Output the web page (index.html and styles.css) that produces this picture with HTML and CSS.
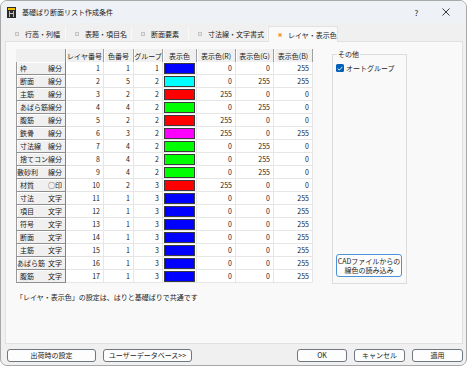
FILE: index.html
```html
<!DOCTYPE html>
<html lang="ja">
<head>
<meta charset="utf-8">
<title>基礎ばり断面リスト作成条件</title>
<link rel="stylesheet" href="styles.css">
</head>
<body>
<div class="window">
  <div class="titlebar">
    <svg class="app-icon" width="9" height="11" viewBox="0 0 9 11">
      <rect x="0" y="0" width="9" height="11" fill="#2b2b2b"/>
      <rect x="1" y="1" width="7" height="2" fill="#f2c200"/>
      <rect x="2" y="4" width="1" height="6" fill="#f2c200"/>
      <rect x="6" y="4" width="1" height="6" fill="#f2c200"/>
      <rect x="3" y="6" width="3" height="1" fill="#d0d0d0"/>
    </svg>
    <span class="title">基礎ばり断面リスト作成条件</span>
    <span class="tb-btn help">?</span>
    <span class="tb-btn close">
      <svg width="8" height="8" viewBox="0 0 8 8"><path d="M0.5 0.5 L7.5 7.5 M7.5 0.5 L0.5 7.5" stroke="#222" stroke-width="0.9"/></svg>
    </span>
  </div>

  <div class="tabs">
    <div class="tab t1"><span class="tab-ic"></span><span>行高・列幅</span></div>
    <div class="tab t2"><span class="tab-ic"></span><span>表題・項目名</span></div>
    <div class="tab t3"><span class="tab-ic"></span><span>断面要素</span></div>
    <div class="tab t4"><span class="tab-ic"></span><span>寸法線・文字書式</span></div>
    <div class="tab t5 active"><span class="tab-ic"></span><span>レイヤ・表示色</span></div>
  </div>

  <div class="panel">
    <div class="content">
      <table class="grid">
        <colgroup>
          <col class="w-rh"><col class="w-38"><col class="w-30"><col class="w-29"><col class="w-34"><col class="w-39"><col class="w-38"><col class="w-39">
        </colgroup>
        <thead>
          <tr>
            <th class="corner"></th>
            <th>レイヤ番号</th><th>色番号</th><th>グループ</th><th>表示色</th><th>表示色(R)</th><th>表示色(G)</th><th>表示色(B)</th>
          </tr>
        </thead>
        <tbody>
          <tr><th class="rh"><div class="rh-in"><span>枠</span><span>線分</span></div></th><td>1</td><td>1</td><td>1</td><td class="sw"><div class="swatch blue"></div></td><td>0</td><td>0</td><td>255</td></tr>
          <tr><th class="rh"><div class="rh-in"><span>断面</span><span>線分</span></div></th><td>2</td><td>5</td><td>2</td><td class="sw"><div class="swatch cyan"></div></td><td>0</td><td>255</td><td>255</td></tr>
          <tr><th class="rh"><div class="rh-in"><span>主筋</span><span>線分</span></div></th><td>3</td><td>2</td><td>2</td><td class="sw"><div class="swatch red"></div></td><td>255</td><td>0</td><td>0</td></tr>
          <tr><th class="rh"><div class="rh-in"><span>あばら筋</span><span>線分</span></div></th><td>4</td><td>4</td><td>2</td><td class="sw"><div class="swatch green"></div></td><td>0</td><td>255</td><td>0</td></tr>
          <tr><th class="rh"><div class="rh-in"><span>腹筋</span><span>線分</span></div></th><td>5</td><td>2</td><td>2</td><td class="sw"><div class="swatch red"></div></td><td>255</td><td>0</td><td>0</td></tr>
          <tr><th class="rh"><div class="rh-in"><span>鉄骨</span><span>線分</span></div></th><td>6</td><td>3</td><td>2</td><td class="sw"><div class="swatch magenta"></div></td><td>255</td><td>0</td><td>255</td></tr>
          <tr><th class="rh"><div class="rh-in"><span>寸法線</span><span>線分</span></div></th><td>7</td><td>4</td><td>2</td><td class="sw"><div class="swatch green"></div></td><td>0</td><td>255</td><td>0</td></tr>
          <tr><th class="rh"><div class="rh-in"><span>捨てコン</span><span>線分</span></div></th><td>8</td><td>4</td><td>2</td><td class="sw"><div class="swatch green"></div></td><td>0</td><td>255</td><td>0</td></tr>
          <tr><th class="rh"><div class="rh-in wide"><span>敷砂利</span><span>線分</span></div></th><td>9</td><td>4</td><td>2</td><td class="sw"><div class="swatch green"></div></td><td>0</td><td>255</td><td>0</td></tr>
          <tr><th class="rh"><div class="rh-in"><span>材質</span><span>○印</span></div></th><td>10</td><td>2</td><td>3</td><td class="sw"><div class="swatch red"></div></td><td>255</td><td>0</td><td>0</td></tr>
          <tr><th class="rh"><div class="rh-in"><span>寸法</span><span>文字</span></div></th><td>11</td><td>1</td><td>3</td><td class="sw"><div class="swatch blue"></div></td><td>0</td><td>0</td><td>255</td></tr>
          <tr><th class="rh"><div class="rh-in"><span>項目</span><span>文字</span></div></th><td>12</td><td>1</td><td>3</td><td class="sw"><div class="swatch blue"></div></td><td>0</td><td>0</td><td>255</td></tr>
          <tr><th class="rh"><div class="rh-in"><span>符号</span><span>文字</span></div></th><td>13</td><td>1</td><td>3</td><td class="sw"><div class="swatch blue"></div></td><td>0</td><td>0</td><td>255</td></tr>
          <tr><th class="rh"><div class="rh-in"><span>断面</span><span>文字</span></div></th><td>14</td><td>1</td><td>3</td><td class="sw"><div class="swatch blue"></div></td><td>0</td><td>0</td><td>255</td></tr>
          <tr><th class="rh"><div class="rh-in"><span>主筋</span><span>文字</span></div></th><td>15</td><td>1</td><td>3</td><td class="sw"><div class="swatch blue"></div></td><td>0</td><td>0</td><td>255</td></tr>
          <tr><th class="rh"><div class="rh-in wide"><span>あばら筋</span><span>文字</span></div></th><td>16</td><td>1</td><td>3</td><td class="sw"><div class="swatch blue"></div></td><td>0</td><td>0</td><td>255</td></tr>
          <tr><th class="rh"><div class="rh-in"><span>腹筋</span><span>文字</span></div></th><td>17</td><td>1</td><td>3</td><td class="sw"><div class="swatch blue"></div></td><td>0</td><td>0</td><td>255</td></tr>
        </tbody>
      </table>

      <fieldset class="group">
        <legend>その他</legend>
        <div class="group-body">
          <label class="check">
            <span class="box"><svg width="6" height="5" viewBox="0 0 6 5"><path d="M0.6 2.6 L2.3 4.1 L5.4 0.8" fill="none" stroke="#fff" stroke-width="0.9"/></svg></span>
            <span>オートグループ</span>
          </label>
          <button class="cad-btn">CADファイルからの<br>線色の読み込み</button>
        </div>
      </fieldset>
    </div>
    <p class="note">「レイヤ・表示色」の設定は、はりと基礎ばりで共通です</p>
  </div>

  <div class="buttons">
    <button class="btn wide-btn">出荷時の設定</button>
    <button class="btn wide-btn">ユーザーデータベース&gt;&gt;</button>
    <span class="spacer"></span>
    <button class="btn ok">OK</button>
    <button class="btn">キャンセル</button>
    <button class="btn">適用</button>
  </div>
</div>
</body>
</html>
```

FILE: styles.css
```css
* { box-sizing: border-box; }
html, body { margin: 0; padding: 0; }
body {
  width: 469px;
  height: 368px;
  overflow: hidden;
  background: #ffffff;
  font-family: "Noto Sans CJK JP", "Noto Sans", sans-serif;
  font-size: 7px;
  color: #111;
}
.window {
  width: 467px;
  height: 366px;
  border: 1px solid #a8a8a8;
  border-radius: 7px;
  background: #f0f0f0;
  display: flex;
  flex-direction: column;
  overflow: hidden;
}
.titlebar {
  height: 22px;
  flex: none;
  display: flex;
  align-items: center;
  padding-left: 6px;
  background: #eef1f6;
}
.app-icon { margin-right: 6px; flex: none; }
.title { flex: 1; font-size: 7px; color: #1a1a1a; }
.tb-btn {
  width: 29px;
  display: flex;
  justify-content: center;
  align-items: center;
  font-size: 8px;
  color: #222;
}
.tb-btn.close { margin-right: 6px; }

.tabs {
  flex: none;
  display: flex;
  height: 15px;
  margin-top: 3px;
  padding-left: 5px;
}
.tab {
  display: flex;
  align-items: center;
  gap: 6px;
  padding-left: 9px;
  color: #222;
  background: #f0f0f0;
  border-right: 1px solid #f8f8f8;
}
.t1 { width: 60px; }
.t2 { width: 66px; }
.t3 { width: 57px; }
.t4 { width: 79px; }
.t5 { width: 70px; }
.tab-ic {
  width: 4px;
  height: 4px;
  background: #e8e8e8;
  border: 1px solid #c4c4c4;
  flex: none;
}
.tab.active {
  background: #f9f9f9;
  border: 1px solid #e2e2e2;
  border-bottom: none;
  margin-bottom: -1px;
  position: relative;
  z-index: 1;
}
.tab.active .tab-ic {
  background: #f39a2a;
  border-color: #f7c98f;
}

.panel {
  flex: none;
  height: 303px;
  margin: 0 3px 0 4px;
  border: 1px solid #e0e0e0;
  background: #f9f9f9;
  padding: 7px 0 0 10px;
  display: flex;
  flex-direction: column;
}
.content {
  display: flex;
  gap: 19px;
  align-items: flex-start;
}

.grid {
  table-layout: fixed;
  border-collapse: separate;
  border-spacing: 0;
  width: 297px;
  flex: none;
}
.w-rh { width: 50px; }
.w-38 { width: 38px; }
.w-30 { width: 30px; }
.w-29 { width: 29px; }
.w-34 { width: 34px; }
.w-39 { width: 39px; }
.grid th, .grid td {
  height: 13px;
  padding: 0;
  line-height: 12px;
  font-weight: normal;
  white-space: nowrap;
}
.grid thead th {
  background: #f0f0f0;
  text-align: center;
  border-right: 1px solid #a0a0a0;
  box-shadow: inset 1px 0 #ffffff;
  color: #1a1a1a;
  overflow: hidden;
}
.grid thead th.corner {
  border-right: 1px solid #8c8c8c;
  box-shadow: none;
}
.grid .rh {
  background: #f0f0f0;
  border-left: 1px solid #9a9a9a;
  border-right: 1px solid #808080;
  border-bottom: 1px solid #909090;
  box-shadow: inset 1px 1px #ffffff;
  padding: 0 3px 0 3px;
}
.rh-in {
  display: flex;
  justify-content: space-between;
  color: #1a1a1a;
}
.rh-in.wide { margin-left: -3px; }
.grid td {
  background: #ffffff;
  border-right: 1px solid #e6e6e6;
  border-bottom: 1px solid #e6e6e6;
  text-align: right;
  padding-right: 3px;
  color: #1a1a1a;
  overflow: hidden;
}
.grid td.sw { padding: 0 1px 0 1px; }
.swatch {
  height: 11px;
  border: 1px solid #3a3a3a;
}
.blue { background: #0000ff; }
.cyan { background: #00ffff; }
.red { background: #ff0000; }
.green { background: #00ff00; }
.magenta { background: #ff00ff; }

.group {
  margin: 0;
  padding: 0 4px 6px 3px;
  width: 75px;
  height: 235px;
  border: 1px solid #dcdcdc;
  min-width: 0;
}
.group legend {
  padding: 0 1px;
  margin-left: 1px;
  line-height: 10px;
  color: #1a1a1a;
}
.group-body {
  height: 100%;
  display: flex;
  flex-direction: column;
}
.check {
  display: flex;
  align-items: center;
  gap: 2px;
  margin-top: 4px;
  color: #1a1a1a;
}
.box {
  width: 8px;
  height: 8px;
  border-radius: 1.5px;
  background: #005fb8;
  display: flex;
  align-items: center;
  justify-content: center;
}
.cad-btn {
  margin-top: auto;
  width: 66px;
  height: 23px;
  padding: 0;
  font: inherit;
  font-size: 7px;
  line-height: 8.5px;
  color: #1a1a1a;
  background: #fdfdfd;
  border: 1px solid #4a93d8;
  border-radius: 3px;
}

.note {
  margin: 9px 0 0;
  line-height: 9px;
  color: #1a1a1a;
}

.buttons {
  flex: none;
  display: flex;
  gap: 7px;
  margin-top: 5px;
  padding: 0 3px 0 6px;
}
.spacer { flex: 1; }
.btn {
  height: 13px;
  width: 51px;
  padding: 0;
  font: inherit;
  font-size: 7px;
  line-height: 11px;
  color: #1a1a1a;
  background: #fdfdfd;
  border: 1px solid #70777f;
  border-radius: 3px;
}
.btn.wide-btn { width: 89px; }
.btn.ok { width: 50px; }
```
